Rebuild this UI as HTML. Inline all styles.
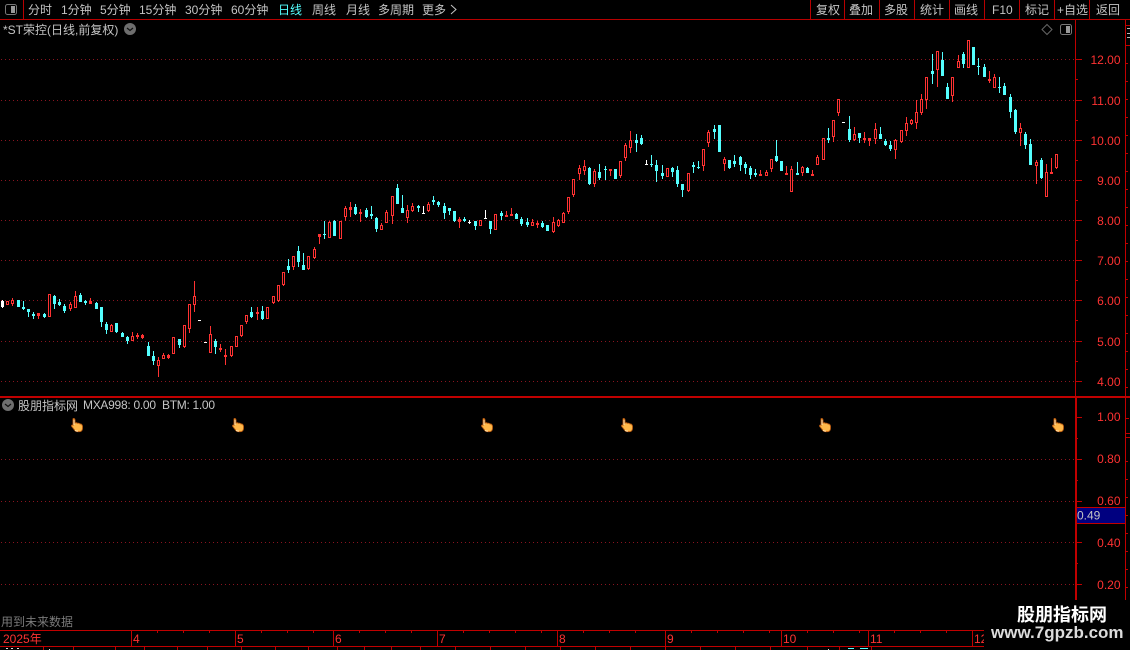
<!DOCTYPE html>
<html><head><meta charset="utf-8">
<style>
html,body{margin:0;padding:0;background:#000;width:1130px;height:650px;overflow:hidden}
svg{position:absolute;left:0;top:0;display:block}
text{font-family:"Liberation Sans","WenQuanYi Zen Hei","Noto Sans CJK SC",sans-serif;font-size:12px}
</style></head><body>
<svg id="s" width="1130" height="650" viewBox="0 0 1130 650" xmlns="http://www.w3.org/2000/svg">
<g id="grid" shape-rendering="crispEdges"></g>
<g id="candles" shape-rendering="crispEdges"></g>
<g fill="#c4c4c4">
<text x="28" y="14">分时</text><text x="61" y="14">1分钟</text><text x="100" y="14">5分钟</text><text x="139" y="14">15分钟</text><text x="185" y="14">30分钟</text><text x="231" y="14">60分钟</text><text x="278" y="14" fill="#54ffff">日线</text><text x="312" y="14">周线</text><text x="346" y="14">月线</text><text x="378" y="14">多周期</text><text x="422" y="14">更多</text>
<text x="816" y="14">复权</text><text x="849" y="14">叠加</text><text x="884" y="14">多股</text><text x="920" y="14">统计</text><text x="954" y="14">画线</text><text x="992" y="14">F10</text><text x="1025" y="14">标记</text><text x="1057" y="14">+自选</text><text x="1096" y="14">返回</text>
<text x="3" y="34">*ST荣控(日线,前复权)</text>
<text x="18" y="410">股朋指标网</text>
<text x="83" y="409" textLength="73">MXA998: 0.00</text><text x="162" y="409" textLength="53">BTM: 1.00</text>
</g>
<path d="M451 5l5 4.500-5 4.500" fill="none" stroke="#c4c4c4"/>
<g fill="#ff3232" text-anchor="end">
<text x="1120.500" y="64">12.00</text><text x="1120.500" y="105">11.00</text><text x="1120.500" y="145">10.00</text><text x="1120.500" y="185">9.00</text><text x="1120.500" y="225">8.00</text><text x="1120.500" y="265">7.00</text><text x="1120.500" y="305">6.00</text><text x="1120.500" y="346">5.00</text><text x="1120.500" y="386">4.00</text>
<text x="1120.500" y="421">1.00</text><text x="1120.500" y="463">0.80</text><text x="1120.500" y="505">0.60</text><text x="1120.500" y="547">0.40</text><text x="1120.500" y="589">0.20</text>
</g>
<rect x="1077" y="507" width="48" height="17" fill="#000080"/>
<path d="M1076 507.500H1125M1076 523.500H1125" stroke="#c00000" shape-rendering="crispEdges"/>
<text x="1077" y="519.500" fill="#c4c4c4">0.49</text>
<!-- icons -->
<circle cx="130" cy="29" r="6" fill="#6e6e6e"/><path d="M127 28l3 2.500 3-2.500" fill="none" stroke="#111" stroke-width="1.200"/>
<circle cx="8" cy="405" r="6" fill="#6e6e6e"/><path d="M5 404l3 2.500 3-2.500" fill="none" stroke="#111" stroke-width="1.200"/>
<rect x="5.500" y="4.500" width="11" height="10" rx="2" fill="#000" stroke="#777"/><rect x="11" y="6" width="4" height="7" fill="#999"/>
<rect x="1060.500" y="24.500" width="11" height="10" rx="2" fill="#000" stroke="#777"/><rect x="1066" y="26" width="4" height="7" fill="#999"/>
<path d="M1047 24.500l5 5-5 5-5-5z" fill="none" stroke="#666"/>
<defs><g id="h">
<path d="M2.500 .5C3.500 .5 4 1.200 4 2.500L4 5C5 4.600 6 4.800 6.500 5.300 7.500 5 8.500 5.300 9 6 10 5.800 11 6.500 11.500 8L11.500 10.500C11.500 12.500 10 13.700 8 13.700L6.500 13.700C5 13.700 4 13 3.300 11.700L.6 8.300C.2 7.500 1 6.600 2 7.300L2 2C2 1 2 .5 2.500 .5Z" fill="#ffb84a" stroke="#b85a10" stroke-width=".9"/>
<path d="M3 2L3 7M4 12.500C5 13 6 13.200 7 13.200" stroke="#ffeec8" stroke-width=".9" fill="none"/>
</g></defs>
<use href="#h" x="71" y="418"/><use href="#h" x="232" y="418"/><use href="#h" x="481" y="418"/><use href="#h" x="621" y="418"/><use href="#h" x="819" y="418"/><use href="#h" x="1052" y="418"/>
<text x="1" y="626" fill="#7a7a7a">用到未来数据</text>
<g fill="#ff3232">
<text x="3" y="643">2025年</text><text x="133" y="643">4</text><text x="237" y="643">5</text><text x="335" y="643">6</text><text x="439" y="643">7</text><text x="559" y="643">8</text><text x="667" y="643">9</text><text x="783" y="643">10</text><text x="870" y="643">11</text><text x="974" y="643">12</text>
</g>
<rect x="984" y="600" width="146" height="50" fill="#000"/>
<text x="1017" y="621" fill="#fff" style="font-size:18px;font-weight:bold;font-family:'Noto Sans CJK SC','WenQuanYi Zen Hei',sans-serif">股朋指标网</text>
<text x="991" y="638" fill="#dcdcdc" style="font-size:17px;font-weight:bold">www.7gpzb.com</text>
</svg>
<script>
var NS="http://www.w3.org/2000/svg",G=document.getElementById("candles"),H=document.getElementById("grid");
function R(p,x,y,w,h,c){var e=document.createElementNS(NS,"rect");e.setAttribute("x",x);e.setAttribute("y",y);e.setAttribute("width",w);e.setAttribute("height",h);e.setAttribute("fill",c);p.appendChild(e);}
var RED="#ff3232",CY="#54ffff",WH="#ffffff",LINE="#b80000";
function C(x,t,wt,bt,bb,wb){
 var cx=Math.round(x-0.5),c=t=="r"?RED:t=="c"?CY:WH;
 wt=Math.round(wt);bt=Math.round(bt);bb=Math.round(bb);wb=Math.round(wb);
 R(G,cx,wt,1,Math.max(wb-wt,1),c);
 var h=Math.max(bb-bt,1);
 if(t=="w"){R(G,cx-1,bt,3,Math.max(h,1),c);return;}
 if(t=="c"){R(G,cx-1,bt,3,h,c);return;}
 if(h<=3){R(G,cx-1,bt,3,Math.max(h,2),c);return;}
 R(G,cx-1,bt,3,h,c);R(G,cx,bt+1,1,h-2,"#000");
}
function S(ox,oy,l){l.forEach(function(a){C(ox+a[0]/3,a[1],oy+a[2]/3,oy+a[3]/3,oy+a[4]/3,oy+a[5]/3);});}
S(0,280,[[7,"w",60,63,80,84],[22,"r",63,63,75,75],[37,"r",54,60,72,78],[55,"c",60,60,81,81],[70,"c",63,81,87,90],[85,"c",87,87,96,111],[100,"c",96,102,108,117],[115,"r",99,99,108,117],[133,"c",99,102,111,114],[148,"r",42,42,111,111],[163,"c",45,48,72,87],[178,"c",57,66,75,78],[193,"c",72,78,93,99],[211,"r",66,72,87,93],[226,"r",33,48,84,84],[241,"c",39,45,66,66],[256,"c",60,63,69,75],[271,"r",54,63,72,72],[289,"c",66,69,87,87],[304,"c",81,81,126,141],[319,"c",126,132,150,162],[334,"r",132,135,156,156],[349,"c",129,129,156,159],[367,"c",156,159,171,171],[382,"c",168,171,183,192],[397,"r",156,168,183,183],[412,"r",159,165,168,177],[427,"r",162,165,174,177],[445,"c",186,198,228,228],[460,"c",213,228,243,255],[475,"r",231,240,258,291],[490,"r",219,225,237,237],[505,"r",222,225,234,237],[520,"r",171,171,222,222],[538,"c",177,177,195,204],[553,"r",135,135,201,204],[568,"r",72,72,147,159],[583,"r",3,48,75,96],[598,"w",120,120,123,123],[616,"w",186,186,189,189],[631,"r",138,162,219,219],[646,"c",177,183,201,222],[661,"r",192,204,207,216],[676,"r",207,225,231,255],[694,"r",198,198,228,231],[709,"r",168,168,201,201],[724,"r",135,135,168,171],[739,"r",105,105,126,132],[754,"c",81,96,111,114],[772,"r",81,96,98,120],[787,"c",78,93,117,120],[802,"r",81,81,117,117]]);
C(273,"r",296,296,303,304);C(278,"r",285,285,301,302);
S(270,170,[[40,"r",306,306,345,348],[55,"c",267,288,300,309],[70,"r",258,258,291,300],[85,"c",228,243,276,291],[100,"c",249,285,300,300],[115,"r",258,258,297,300],[133,"r",231,237,264,267],[148,"r",192,192,201,222],[163,"c",153,192,195,207],[178,"r",153,156,204,204],[193,"c",150,153,198,198],[211,"r",153,153,207,207],[226,"r",108,114,141,153],[241,"r",96,111,120,141],[256,"c",102,111,132,135],[271,"r",117,126,132,156],[289,"c",114,120,141,144],[304,"c",108,132,138,147],[319,"c",141,144,177,186],[334,"r",159,165,180,180],[349,"r",120,126,159,159],[367,"r",78,78,138,162],[382,"c",42,54,102,102],[397,"c",75,114,129,129],[412,"r",105,120,144,159],[427,"r",99,108,123,126],[445,"c",105,108,114,126],[460,"w",108,129,132,132],[475,"r",96,102,123,126],[490,"c",78,90,96,105],[505,"c",93,96,105,111],[523,"c",99,108,129,147],[538,"c",114,114,123,135],[553,"c",123,123,153,156],[568,"r",141,147,156,174],[583,"c",141,147,153,156],[598,"w",150,156,160,162],[616,"c",153,153,168,180],[631,"r",150,150,168,168],[646,"w",120,144,147,147],[661,"c",153,153,177,192],[676,"r",132,132,180,180],[694,"c",123,129,138,150],[709,"r",123,135,141,141],[724,"r",114,132,138,138],[739,"c",129,132,147,147],[754,"c",141,147,162,168],[772,"c",144,156,165,171],[787,"r",147,156,168,168],[802,"r",153,159,165,174],[817,"c",153,159,171,174],[832,"c",165,165,183,183],[850,"r",141,156,186,189],[865,"r",147,150,168,171],[880,"r",126,129,159,159]]);
S(560,90,[[25,"r",321,321,366,372],[40,"r",267,267,315,321],[58,"r",225,234,252,270],[73,"r",210,228,243,255],[88,"c",231,234,282,285],[103,"r",237,243,282,291],[118,"c",222,246,264,270],[136,"c",228,237,240,270],[151,"r",237,237,243,258],[166,"c",237,237,267,267],[181,"r",213,213,258,264],[196,"r",159,165,204,213],[211,"r",123,150,174,189],[229,"c",132,150,159,186],[244,"c",135,144,162,165],[259,"w",210,222,225,225],[274,"c",195,222,225,231],[289,"c",210,225,243,276],[307,"c",225,249,258,267],[322,"r",234,234,261,261],[337,"c",231,234,246,261],[352,"c",228,240,282,291],[367,"c",282,282,300,321],[385,"r",249,249,303,306],[400,"c",216,225,231,249],[415,"c",213,231,234,237],[430,"r",177,177,228,243],[445,"r",120,126,159,171],[463,"c",105,117,126,147],[478,"c",105,105,186,186],[493,"r",201,207,222,243],[508,"c",210,210,234,237],[523,"c",195,213,222,231],[541,"c",198,201,225,243],[556,"c",216,222,234,252],[571,"c",228,234,255,267],[586,"c",237,249,255,261],[601,"r",240,252,258,258],[619,"r",240,246,258,258],[634,"r",207,207,237,246],[649,"c",150,198,213,216],[664,"c",213,213,243,243],[679,"r",228,249,252,252],[694,"r",228,237,306,306],[712,"c",216,249,255,255],[727,"r",228,231,249,258],[742,"c",231,234,249,249],[757,"r",240,252,255,255],[772,"r",195,201,225,225],[790,"r",144,144,210,210],[805,"c",114,144,150,159],[820,"r",90,90,141,156],[835,"r",27,27,69,78],[850,"w",97,97,99,99]]);
S(840,30,[[28,"c",258,297,330,335],[43,"r",291,312,330,333],[58,"c",310,310,325,339],[73,"r",306,324,330,339],[88,"r",324,324,332,348],[106,"r",279,297,327,342],[121,"c",291,312,327,327],[136,"c",327,333,345,348],[151,"c",333,345,357,363],[166,"r",327,330,360,387],[184,"r",300,300,336,339],[199,"r",261,279,303,318],[214,"r",267,270,282,285],[229,"r",210,246,279,297],[244,"r",192,207,249,255],[259,"r",141,141,209,237],[277,"c",72,123,132,162],[292,"r",63,63,120,171],[307,"c",66,90,138,138],[322,"c",159,171,207,207],[337,"r",141,141,198,216],[355,"r",75,93,114,114],[370,"c",66,72,102,114],[385,"r",30,30,114,114],[400,"c",51,51,105,105],[415,"c",84,108,110,135],[433,"c",102,111,141,141],[448,"r",123,147,149,159],[463,"r",132,141,174,174],[478,"c",141,171,174,189],[493,"c",159,168,195,195],[511,"c",192,201,246,264],[526,"c",237,240,306,312],[541,"r",279,294,309,348],[556,"c",306,312,345,357],[571,"c",327,342,405,405],[589,"r",390,396,408,462],[604,"c",384,390,444,447],[619,"r",402,426,501,501],[634,"r",384,426,432,432],[649,"r",372,372,414,417]]);
// grid
[59,100,140,180,220,260,300,341,381,459,501,542,584].forEach(function(y){for(var x=1;x<1075;x+=4)R(H,x,y,1,1,"#8a1420");});
// frame lines
R(H,0,19,1130,1,LINE);R(H,23,0,1,19,LINE);
[810,844,879,914,949,984,1019,1054,1089].forEach(function(x){R(H,x,0,1,19,LINE);});
R(H,0,396,1130,2,"#c00000");
R(H,1075,20,1,376,"#c00000");R(H,1075,398,2,202,"#c00000");R(H,1125,20,1,580,"#c00000");
[59,100,140,180,220,260,300,341,381,417,459,501,542,584].forEach(function(y){R(H,1076,y,6,1,"#c00000");});
[79,120,160,200,240,280,320,361,438,480,522,563].forEach(function(y){R(H,1076,y,2,1,"#c00000");});
R(H,1126,25,4,1,"#c00000");R(H,1126,45,4,1,"#c00000");R(H,1126,433,4,1,"#c00000");R(H,1126,437,4,1,"#c00000");R(H,1126,418,3,1,"#c00000");
for(var y=63;y<396;y+=18){R(H,1126,y,2,1,"#c00000");}
for(var y=461;y<600;y+=18){R(H,1126,y,2,1,"#c00000");}
R(H,1127,28,3,1,"#bbbbbb");R(H,1127,33,3,1,"#bbbbbb");R(H,1127,37,3,1,"#bbbbbb");
// time axis
R(H,0,630,984,1,"#c00000");R(H,0,646,984,1,"#c00000");
[131,235,333,437,557,665,781,868,972].forEach(function(x){R(H,x,630,1,16,"#c00000");});
for(var i=0;i<9;i++){var a=[131,235,333,437,557,665,781,868,972][i],b=[235,333,437,557,665,781,868,972,984][i];for(var x=a+26;x<b-6;x+=26)R(H,Math.round(x),631,1,2,"#c00000");}
[43,73,115,144,177,207,241,275,308,337,364,391,420,455,490,525,560,595,630,665,700,735,770,807,839,871].forEach(function(x){R(H,x,647,1,3,"#c00000");});
[[6,648,2],[11,648,2],[17,648,2],[49,649,1],[828,649,1],[848,648,6],[860,648,8]].forEach(function(a,i){R(H,a[0],a[1],a[2],1,i>4?"#54ffff":"#dddddd");});
</script>
</body></html>
